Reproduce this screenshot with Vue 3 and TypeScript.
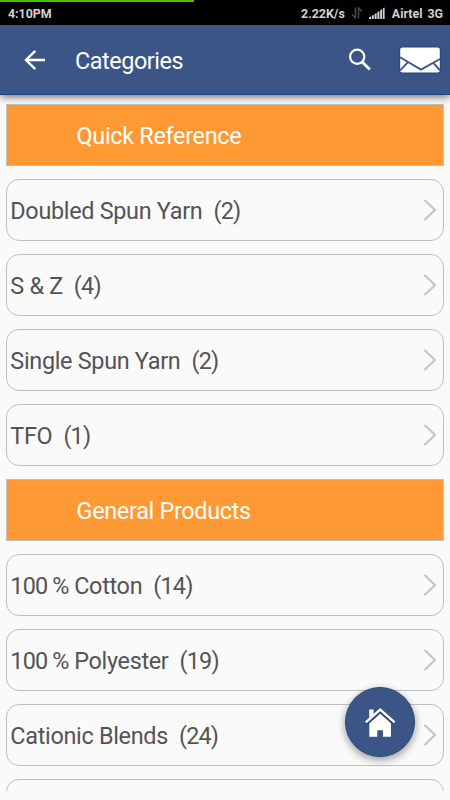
<script setup lang="ts">
interface Category {
  prefix?: string
  name: string
  count: number
}

interface Section {
  title: string
  items: Category[]
}

const sections: Section[] = [
  {
    title: 'Quick Reference',
    items: [
      { name: 'Doubled Spun Yarn', count: 2 },
      { name: 'S & Z', count: 4 },
      { name: 'Single Spun Yarn', count: 2 },
      { name: 'TFO', count: 1 },
    ],
  },
  {
    title: 'General Products',
    items: [
      { prefix: '100 %', name: ' Cotton', count: 14 },
      { prefix: '100 %', name: ' Polyester', count: 19 },
      { name: 'Cationic Blends', count: 24 },
    ],
  },
]
</script>

<template>
  <div class="screen">
    <div class="status">
      <div class="progress"></div>
      <span class="time">4:10PM</span>
      <span class="speed">2.22K/s</span>
      <svg class="transfer" width="12" height="12" viewBox="0 0 12 12">
        <path d="M4.5 0.5V11L1 7.5M7.5 11.5V1L11 4.5" fill="none" stroke="#484848" stroke-width="1.5" />
      </svg>
      <svg class="signal" width="16" height="12" viewBox="0 0 16 12" fill="#d6d6d6">
        <path d="M0 12V10.2L2 9.5V12zM2.8 12V8.7L4.8 7.7V12zM5.6 12V7L7.6 6V12zM8.4 12V5.2L10.4 4V12zM11.2 12V3.2L13 2.2V12zM13.8 12V1.5L15.6 0.5V12z" />
      </svg>
      <span class="carrier">Airtel</span>
      <span>3G</span>
    </div>

    <header class="appbar">
      <svg class="back" width="22" height="22" viewBox="0 0 22 22">
        <path d="M21 11H2.5M11.3 1.8L2 11L11.3 20.2" fill="none" stroke="#fff" stroke-width="2.4" />
      </svg>
      <h1>Categories</h1>
      <svg class="search" width="24" height="24" viewBox="0 0 24 24" fill="none" stroke="#fff">
        <circle cx="9.2" cy="8.8" r="7.1" stroke-width="2.2" />
        <path d="M14 13.8L21.8 21.6" stroke-width="2.8" />
      </svg>
      <svg class="mail" width="42" height="28" viewBox="0 0 42 28">
        <rect x="0.5" y="0.5" width="41" height="27" rx="3" fill="#20457f" />
        <rect x="1.2" y="1.4" width="39.6" height="25" rx="2" fill="#fff" />
        <path d="M1 11.2L22 23.6L41 13M1.2 24.3L9 16.2M41 24.3L34.3 16.8" fill="none" stroke="#3b5789" stroke-width="1.9" />
      </svg>
    </header>

    <main class="list">
      <template v-for="section in sections" :key="section.title">
        <h2 class="heading">{{ section.title }}</h2>
        <div v-for="item in section.items" :key="item.name" class="row">
          <span class="label"><span v-if="item.prefix" class="digits">{{ item.prefix }}</span>{{ item.name }}&nbsp; <span class="digits">({{ item.count }})</span></span>
          <svg class="chevron" width="14" height="22" viewBox="0 0 14 22">
            <path d="M2 1.5L12 11L2 20.5" fill="none" stroke="#c5c5c5" stroke-width="2.1" stroke-linecap="round" />
          </svg>
        </div>
      </template>
      <div class="row"></div>
    </main>

    <button class="home" type="button" aria-label="Home">
      <svg width="32" height="32" viewBox="0 0 32 32" fill="#fff">
        <path d="M5.2 3.5H9.5V8L5.2 12z" />
        <path d="M5.3 17L16.2 7L27 17V30.8H19V24.2H13.3V30.8H5.3z" />
        <path d="M2.4 17.4L16.2 5.2L30 17.4" fill="none" stroke="#24437a" stroke-width="3.8" />
        <path d="M1.8 16.4L16.2 3.6L30.6 16.4" fill="none" stroke="#fff" stroke-width="2.5" />
      </svg>
    </button>
  </div>
</template>

<style>
body {
  margin: 0;
  background: #fafafa;
}
</style>

<style scoped>
.screen {
  position: relative;
  display: flex;
  flex-direction: column;
  width: 450px;
  height: 800px;
  overflow: hidden;
  background: #fafafa;
  font-family: Roboto, "Liberation Sans", sans-serif;
}

.status {
  position: relative;
  display: flex;
  flex: none;
  align-items: center;
  box-sizing: border-box;
  height: 25px;
  padding: 1px 7px 0 8px;
  background: #000;
  color: #d2d2d2;
  font-size: 12.4px;
  font-weight: 700;
}

.progress {
  position: absolute;
  top: 0;
  left: 0;
  width: 194px;
  height: 2px;
  background: #43c000;
}

.speed {
  margin-left: auto;
}

.transfer {
  margin-left: 6px;
}

.signal {
  margin-left: 6px;
}

.carrier {
  margin: 0 5px 0 7px;
}

.appbar {
  position: relative;
  z-index: 1;
  display: flex;
  flex: none;
  align-items: center;
  box-sizing: border-box;
  height: 70px;
  padding: 0 9px 0 24px;
  border-bottom: 1px solid #174381;
  background: #3b5686;
  box-shadow: 0 2px 8px rgba(0, 0, 0, 0.55);
  color: #fff;
}

h1 {
  margin: 3px 0 0 29px;
  font-size: 23.4px;
  font-weight: 400;
  line-height: 28px;
  letter-spacing: -0.45px;
}

.search {
  margin-left: auto;
}

.mail {
  margin-left: 27px;
}

.list {
  display: flex;
  flex: none;
  flex-direction: column;
  gap: 13px;
  box-sizing: border-box;
  height: 696px;
  padding: 9px 6px 0;
  overflow: hidden;
}

.heading,
.row {
  display: flex;
  flex: none;
  align-items: center;
  box-sizing: border-box;
  width: 438px;
  height: 62px;
  margin: 0;
  border: 1px solid #c0c0c0;
  font-size: 23.4px;
  font-weight: 400;
  letter-spacing: -0.3px;
}

.heading {
  padding: 2px 0 0 69.5px;
  background: #ff9933;
  color: #fff;
}

.row {
  justify-content: space-between;
  padding: 0 6px 0 3.3px;
  border-radius: 13px;
  color: #545454;
}

.label {
  padding-top: 2px;
  white-space: pre;
}

.digits {
  letter-spacing: -0.8px;
}

.home {
  position: absolute;
  z-index: 2;
  top: 687px;
  left: 345px;
  display: flex;
  align-items: center;
  justify-content: center;
  width: 70px;
  height: 70px;
  padding: 0;
  border: 1px solid #24477e;
  border-radius: 50%;
  background: #3b5686;
  box-shadow: 0 3px 8px rgba(0, 0, 0, 0.4);
}
</style>
